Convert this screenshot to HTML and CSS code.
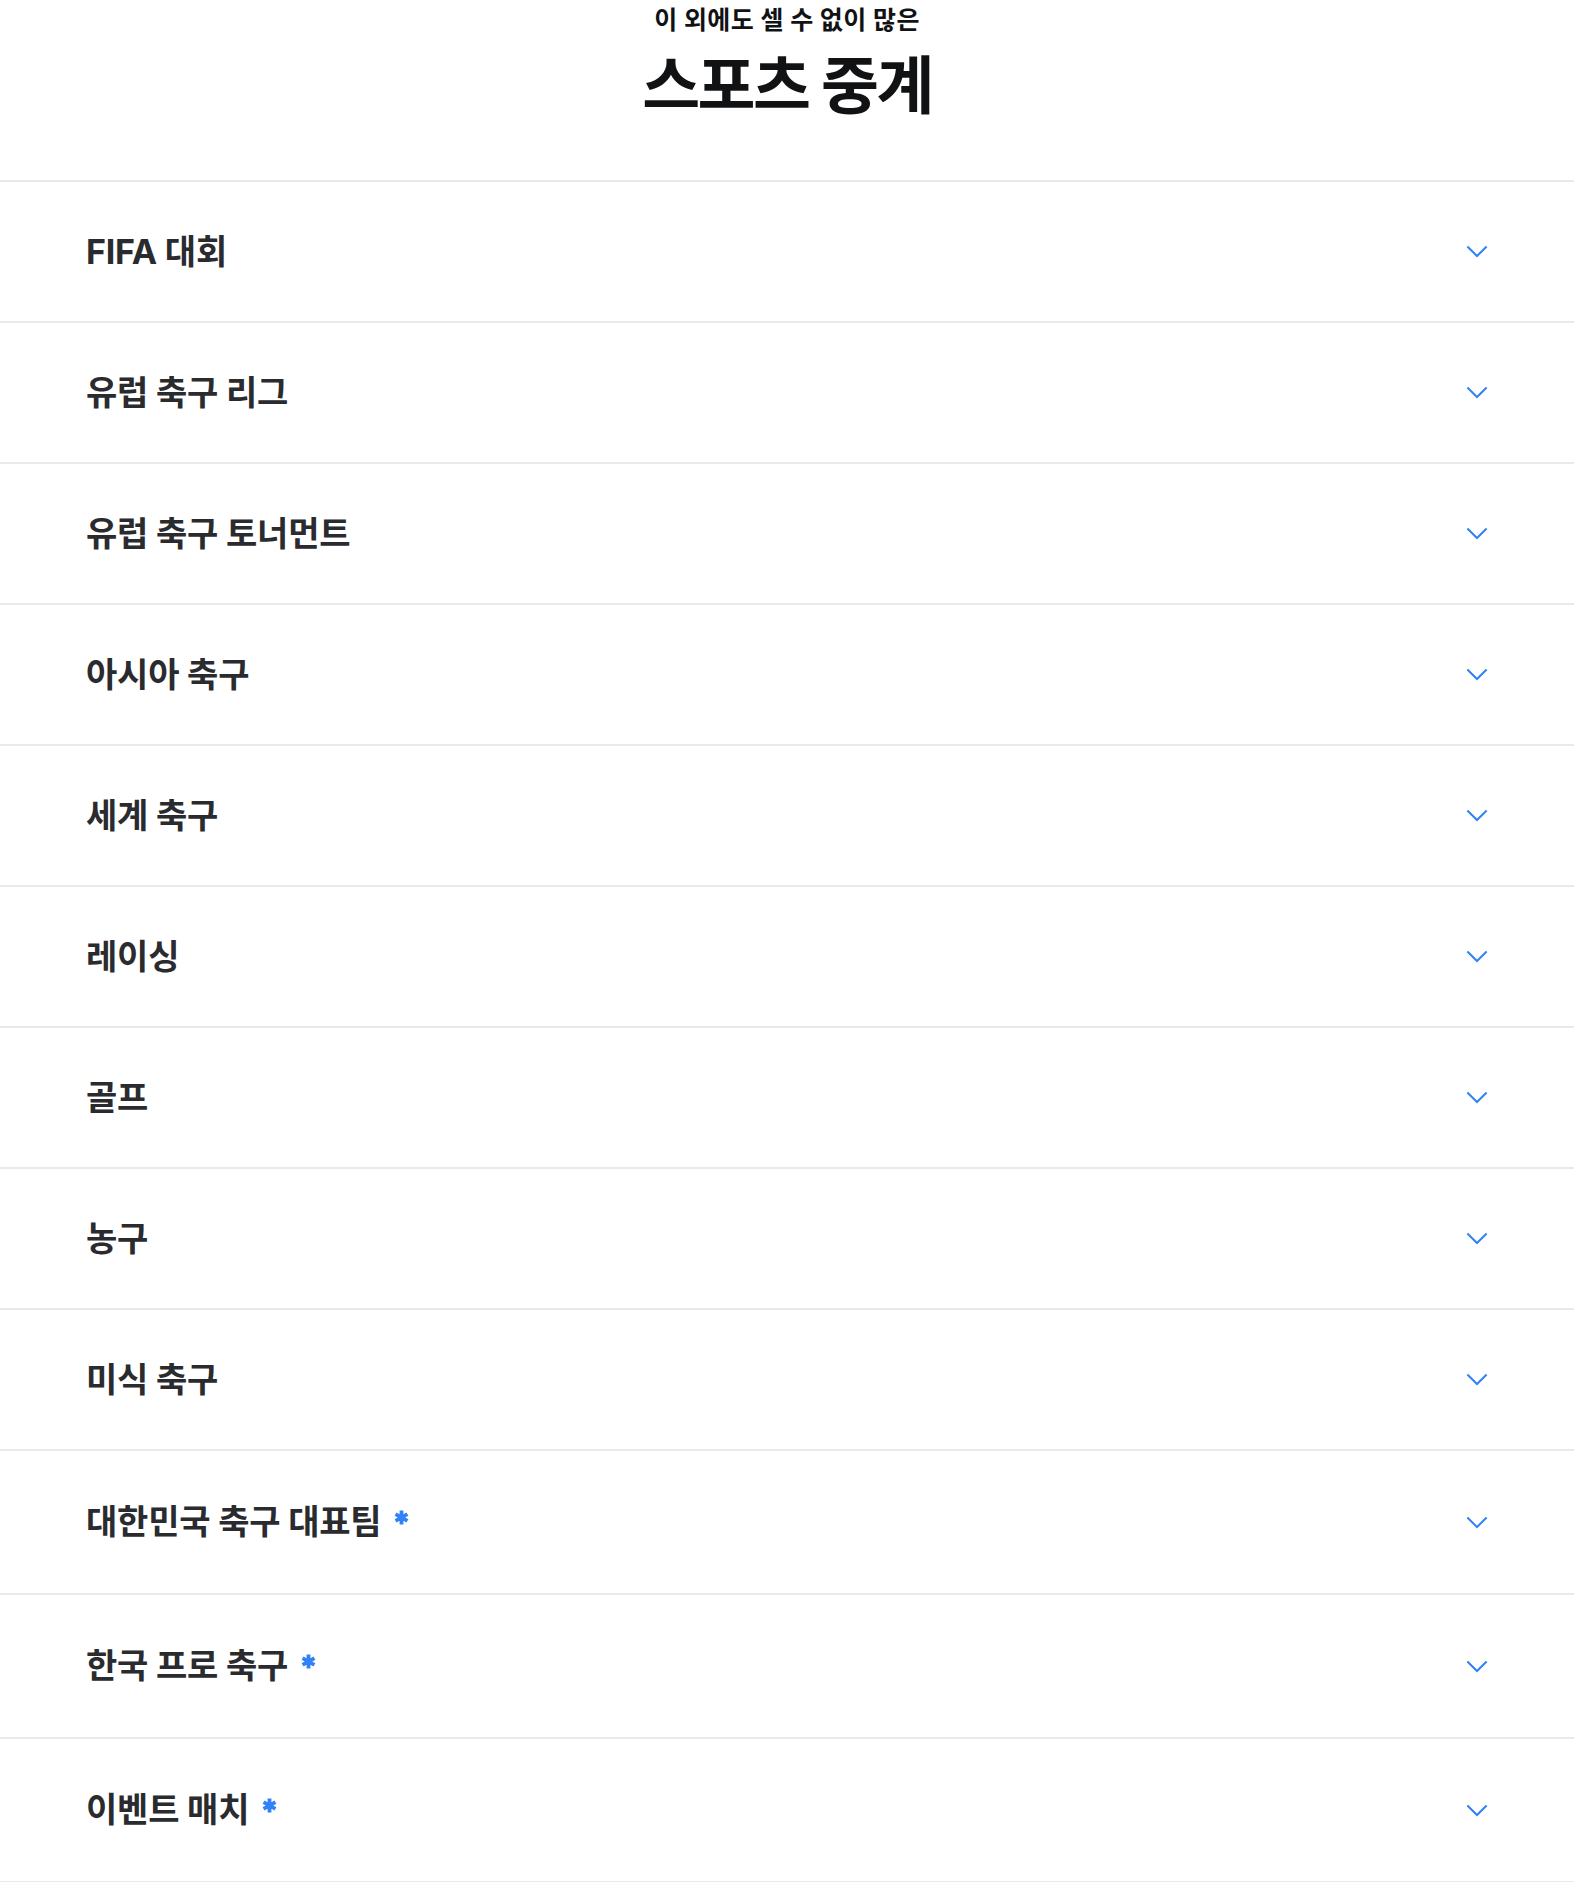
FILE: index.html
```html
<!DOCTYPE html>
<html lang="ko">
<head>
  <meta charset="UTF-8">
  <meta name="viewport" content="width=device-width, initial-scale=1.0">
  <link rel="stylesheet" href="styles.css">
  <title>스포츠 중계</title>
</head>
<body>
  <section class="sports">
    <header class="sports-header">
      <p class="sports-sub">이 외에도 셀 수 없이 많은</p>
      <h2 class="sports-title">스포츠 중계</h2>
    </header>

    <ul class="league-list">
      <li class="league-item"><span class="league-name">FIFA 대회</span><svg class="chevron" viewBox="0 0 24 14"><path d="M1.5 1.5 L12 12 L22.5 1.5"/></svg></li>
      <li class="league-item"><span class="league-name">유럽 축구 리그</span><svg class="chevron" viewBox="0 0 24 14"><path d="M1.5 1.5 L12 12 L22.5 1.5"/></svg></li>
      <li class="league-item"><span class="league-name">유럽 축구 토너먼트</span><svg class="chevron" viewBox="0 0 24 14"><path d="M1.5 1.5 L12 12 L22.5 1.5"/></svg></li>
      <li class="league-item"><span class="league-name">아시아 축구</span><svg class="chevron" viewBox="0 0 24 14"><path d="M1.5 1.5 L12 12 L22.5 1.5"/></svg></li>
      <li class="league-item"><span class="league-name">세계 축구</span><svg class="chevron" viewBox="0 0 24 14"><path d="M1.5 1.5 L12 12 L22.5 1.5"/></svg></li>
      <li class="league-item"><span class="league-name">레이싱</span><svg class="chevron" viewBox="0 0 24 14"><path d="M1.5 1.5 L12 12 L22.5 1.5"/></svg></li>
      <li class="league-item"><span class="league-name">골프</span><svg class="chevron" viewBox="0 0 24 14"><path d="M1.5 1.5 L12 12 L22.5 1.5"/></svg></li>
      <li class="league-item"><span class="league-name">농구</span><svg class="chevron" viewBox="0 0 24 14"><path d="M1.5 1.5 L12 12 L22.5 1.5"/></svg></li>
      <li class="league-item"><span class="league-name">미식 축구</span><svg class="chevron" viewBox="0 0 24 14"><path d="M1.5 1.5 L12 12 L22.5 1.5"/></svg></li>
      <li class="league-item league-item--mark">
        <span class="league-name">대한민국 축구 대표팀<svg class="mark" viewBox="0 0 16 16"><path d="M8 1.5V14.5M2.4 4.75L13.6 11.25M2.4 11.25L13.6 4.75"/></svg></span>
        <svg class="chevron" viewBox="0 0 24 14"><path d="M1.5 1.5 L12 12 L22.5 1.5"/></svg>
      </li>
      <li class="league-item league-item--mark">
        <span class="league-name">한국 프로 축구<svg class="mark" viewBox="0 0 16 16"><path d="M8 1.5V14.5M2.4 4.75L13.6 11.25M2.4 11.25L13.6 4.75"/></svg></span>
        <svg class="chevron" viewBox="0 0 24 14"><path d="M1.5 1.5 L12 12 L22.5 1.5"/></svg>
      </li>
      <li class="league-item league-item--mark">
        <span class="league-name">이벤트 매치<svg class="mark" viewBox="0 0 16 16"><path d="M8 1.5V14.5M2.4 4.75L13.6 11.25M2.4 11.25L13.6 4.75"/></svg></span>
        <svg class="chevron" viewBox="0 0 24 14"><path d="M1.5 1.5 L12 12 L22.5 1.5"/></svg>
      </li>
    </ul>
  </section>
</body>
</html>
```

FILE: styles.css
```css
body {
  margin: 0;
  background-color: #fff;
  font-family: Inter, "Noto Sans CJK KR", sans-serif;
  color: #2a2b2f;
}

.sports-header {
  text-align: center;
  padding: 5px 0 56px;
}

.sports-sub {
  margin: 0;
  font-size: 25px;
  line-height: 31px;
  font-weight: 700;
  letter-spacing: 0.4px;
  color: #111214;
}

.sports-title {
  margin: 10px 0 0;
  font-size: 63px;
  line-height: 78px;
  font-weight: 700;
  letter-spacing: -2.5px;
  color: #111214;
}

.league-list {
  list-style: none;
  margin: 0;
  padding: 0;
  border-bottom: 2px solid #e9e9ea;
}

.league-item {
  display: flex;
  align-items: center;
  justify-content: space-between;
  height: 139px;
  padding: 0 86px 0 86px;
  border-top: 2px solid #e9e9ea;
}

.league-item--mark {
  height: 142px;
}

.league-name {
  display: flex;
  align-items: center;
  margin-top: -5px;
  font-size: 34px;
  font-weight: 700;
  letter-spacing: -0.2px;
}

.mark {
  width: 17px;
  height: 17px;
  margin: -4px 0 0 12px;
  fill: none;
  stroke: #3182f6;
  stroke-width: 3.6;
}

.chevron {
  width: 22px;
  height: 13px;
  fill: none;
  stroke: #3182f6;
  stroke-width: 2.2;
}
```
